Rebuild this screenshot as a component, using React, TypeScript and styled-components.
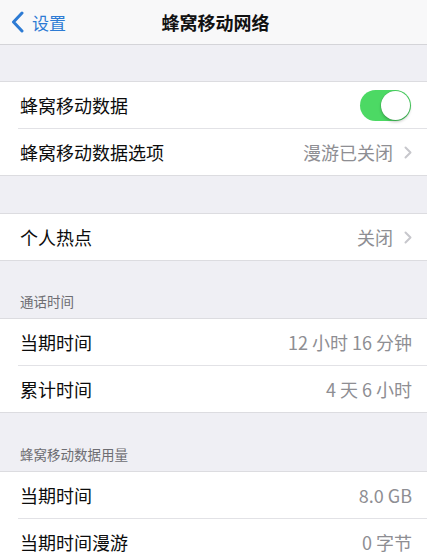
import React from "react";
import styled, { createGlobalStyle } from "styled-components";

//////////////////////// GLOBAL ////////////////////////

const GlobalStyle = createGlobalStyle`
  html, body {
    margin: 0;
    padding: 0;
    background: #efeff4;
  }
  body {
    font-family: "Noto Sans CJK SC", "Noto Sans", sans-serif;
    -webkit-font-smoothing: antialiased;
  }
`;

//////////////////////// STYLED-COMPONENTS ////////////////////////

const Screen = styled.div`
  width: 427px;
  height: 557px;
  overflow: hidden;
  background: #efeff4;
  display: flex;
  flex-direction: column;
`;

const NavBar = styled.header`
  position: relative;
  height: 44px;
  flex-shrink: 0;
  display: flex;
  align-items: center;
  justify-content: center;
  background: #f8f8f9;
  border-bottom: 1px solid #d4d4d8;
`;

const BackButton = styled.div`
  position: absolute;
  left: 11px;
  top: 0;
  height: 44px;
  display: flex;
  align-items: center;
  gap: 8px;
  color: #2d7bd4;
  font-size: 17px;
`;

const Title = styled.h1`
  margin: 0 0 0 4px;
  font-size: 18px;
  font-weight: 600;
  color: #111;
`;

const Spacer = styled.div<{ $h: number }>`
  height: ${(p) => p.$h}px;
  flex-shrink: 0;
`;

const SectionHeader = styled.div<{ $h: number }>`
  height: ${(p) => p.$h}px;
  flex-shrink: 0;
  box-sizing: border-box;
  display: flex;
  align-items: flex-end;
  padding: 0 20px 7px;
  font-size: 13.5px;
  color: #6d6d72;
`;

const Group = styled.section`
  flex-shrink: 0;
  background: #fff;
  border-top: 1px solid #dcdce0;
  border-bottom: 1px solid #dcdce0;
`;

const Row = styled.div`
  position: relative;
  height: 46px;
  display: flex;
  align-items: center;
  justify-content: space-between;
  padding: 0 15px 0 20px;

  & + & {
    border-top: 1px solid transparent;
  }
  & + &::before {
    content: "";
    position: absolute;
    left: 18px;
    right: 0;
    top: -1px;
    height: 1px;
    background: #e2e2e6;
  }
`;

const Label = styled.span`
  font-size: 18px;
  color: #0c0c0c;
`;

const Detail = styled.span`
  display: flex;
  align-items: center;
  gap: 11px;
  font-size: 18px;
  color: #8e8e93;
`;

const Switch = styled.div<{ $on: boolean }>`
  position: relative;
  width: 51px;
  height: 31px;
  margin-right: 1px;
  border-radius: 16px;
  background: ${(p) => (p.$on ? "#4cd964" : "#e5e5ea")};

  &::after {
    content: "";
    position: absolute;
    top: 1px;
    ${(p) => (p.$on ? "right: 1px;" : "left: 1px;")}
    width: 29px;
    height: 29px;
    border-radius: 50%;
    background: #fff;
    box-shadow: 0 2px 3px rgba(0, 0, 0, 0.22), 0 0 0 0.5px rgba(0, 0, 0, 0.12);
  }
`;

//////////////////////// ICONS ////////////////////////

const BackChevron = () => (
  <svg width="13" height="22" viewBox="0 0 13 22" fill="none">
    <path d="M11 2 L2.5 11 L11 20" stroke="#2d7bd4" strokeWidth="3" strokeLinecap="round" strokeLinejoin="round" />
  </svg>
);

const Disclosure = () => (
  <svg width="8" height="13" viewBox="0 0 8 13" fill="none">
    <path d="M1.5 1.5 L6.5 6.5 L1.5 11.5" stroke="#c7c7cc" strokeWidth="2" strokeLinecap="round" strokeLinejoin="round" />
  </svg>
);

//////////////////////// COMPONENT ////////////////////////

const App = () => {
  return (
    <Screen>
      <GlobalStyle />
      <NavBar>
        <BackButton>
          <BackChevron />
          <span>设置</span>
        </BackButton>
        <Title>蜂窝移动网络</Title>
      </NavBar>

      <Spacer $h={36} />
      <Group>
        <Row>
          <Label>蜂窝移动数据</Label>
          <Switch $on />
        </Row>
        <Row>
          <Label>蜂窝移动数据选项</Label>
          <Detail>
            漫游已关闭
            <Disclosure />
          </Detail>
        </Row>
      </Group>

      <Spacer $h={37} />
      <Group>
        <Row>
          <Label>个人热点</Label>
          <Detail>
            关闭
            <Disclosure />
          </Detail>
        </Row>
      </Group>

      <SectionHeader $h={57}>通话时间</SectionHeader>
      <Group>
        <Row>
          <Label>当期时间</Label>
          <Detail>12 小时 16 分钟</Detail>
        </Row>
        <Row>
          <Label>累计时间</Label>
          <Detail>4 天 6 小时</Detail>
        </Row>
      </Group>

      <SectionHeader $h={58}>蜂窝移动数据用量</SectionHeader>
      <Group>
        <Row>
          <Label>当期时间</Label>
          <Detail>8.0 GB</Detail>
        </Row>
        <Row>
          <Label>当期时间漫游</Label>
          <Detail>0 字节</Detail>
        </Row>
      </Group>
    </Screen>
  );
};

//////////////////////// EXPORT ////////////////////////

export default App;
